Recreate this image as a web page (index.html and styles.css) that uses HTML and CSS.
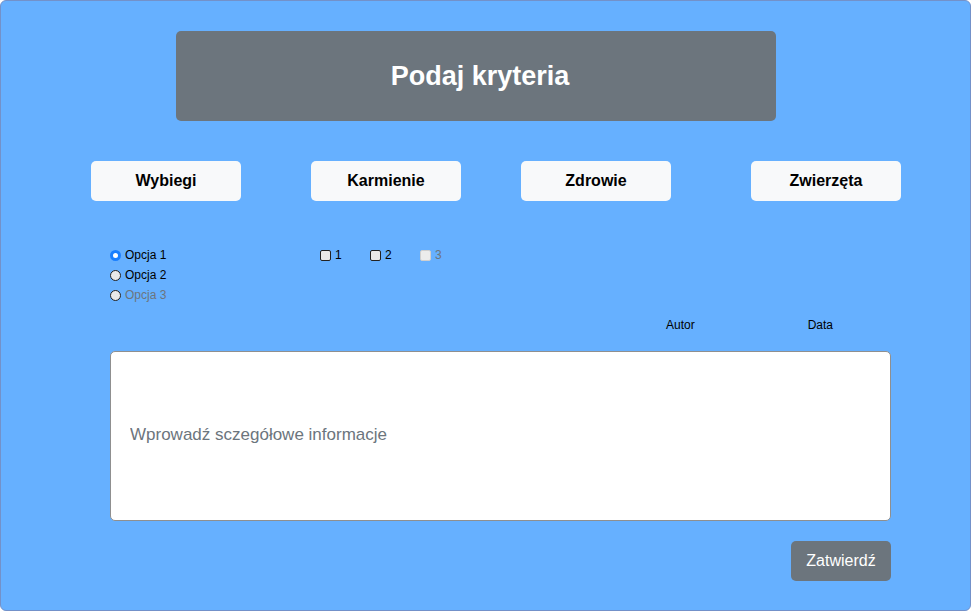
FILE: index.html
```html
<!DOCTYPE html>
<html lang="pl">
<head>
<meta charset="utf-8">
<title>Podaj kryteria</title>
<link rel="stylesheet" href="styles.css">
</head>
<body>
<div class="frame">
  <header class="header"><h1>Podaj kryteria</h1></header>
  <nav class="nav">
    <button class="nav-btn">Wybiegi</button>
    <button class="nav-btn">Karmienie</button>
    <button class="nav-btn">Zdrowie</button>
    <button class="nav-btn">Zwierzęta</button>
  </nav>
  <div class="options">
    <div class="radios">
      <label class="opt"><input class="radio" type="radio" name="o" checked><span>Opcja 1</span></label>
      <label class="opt"><input class="radio" type="radio" name="o"><span>Opcja 2</span></label>
      <label class="opt disabled"><input class="radio" type="radio" name="o" disabled><span>Opcja 3</span></label>
    </div>
    <div class="checks">
      <label class="opt"><input class="check" type="checkbox"><span>1</span></label>
      <label class="opt"><input class="check" type="checkbox"><span>2</span></label>
      <label class="opt disabled"><input class="check" type="checkbox" disabled><span>3</span></label>
    </div>
  </div>
  <div class="meta">
    <span class="autor">Autor</span>
    <span class="data">Data</span>
  </div>
  <input class="details" type="text" placeholder="Wprowadź sczegółowe informacje">
  <div class="actions">
    <button class="submit">Zatwierdź</button>
  </div>
</div>
</body>
</html>
```
FILE: styles.css
```css
* { box-sizing: border-box; }
html, body { margin: 0; padding: 0; }
body {
  font-family: "Liberation Sans", Arial, sans-serif;
  width: 971px;
  height: 611px;
}
.frame {
  width: 971px;
  height: 611px;
  border: 1px solid #7391c9;
  border-radius: 6px;
  background: #66b0ff;
  padding-top: 30px;
  display: flex;
  flex-direction: column;
}
.header {
  margin-left: 175px;
  width: 600px;
  height: 90px;
  background: #6c757d;
  border-radius: 5px;
  display: flex;
  align-items: center;
  justify-content: center;
  padding-left: 8px;
}
.header h1 {
  margin: 0;
  color: #fff;
  font-size: 27px;
  font-weight: bold;
}
.nav {
  margin-top: 40px;
  padding-left: 90px;
  display: grid;
  grid-template-columns: 220px 210px 230px 150px;
}
.nav-btn {
  width: 150px;
  height: 40px;
  border: none;
  border-radius: 5px;
  background: #f8f9fa;
  color: #000;
  font-family: "Liberation Sans", Arial, sans-serif;
  font-size: 16px;
  font-weight: bold;
  padding: 0;
}
.options {
  margin-top: 44px;
  padding-left: 109px;
  display: flex;
  font-size: 12px;
}
.radios {
  width: 210px;
  display: flex;
  flex-direction: column;
}
.checks {
  display: flex;
}
.opt {
  height: 20px;
  display: flex;
  align-items: center;
  color: #000;
}
.checks .opt { width: 50px; }
.opt input {
  -webkit-appearance: none;
  appearance: none;
  margin: 0 4px 0 0;
  width: 11px;
  height: 11px;
  background: #e9e9e9;
  border: 1px solid #222;
}
.radio { border-radius: 50%; }
.radio:checked {
  background: #fff;
  border: 3px solid #1a7fff;
}
.check { border-radius: 2px; }
.check:disabled {
  border-color: #cfcfcf;
  background: #ececec;
}
.opt.disabled { color: #6c757d; }
.meta {
  margin-top: 10px;
  height: 20px;
  display: flex;
  align-items: center;
  font-size: 12px;
  color: #000;
  padding-left: 665px;
}
.data { margin-left: 113px; }
.details {
  margin-top: 16px;
  margin-left: 109px;
  width: 781px;
  height: 170px;
  border: 1px solid #8f8f8f;
  border-radius: 5px;
  background: #fff;
  padding: 0 19px 2px;
  font-family: "Liberation Sans", Arial, sans-serif;
  font-size: 17px;
  outline: none;
}
.details::placeholder { color: #6c757d; }
.actions {
  margin-top: 20px;
  width: 890px;
  display: flex;
  justify-content: flex-end;
}
.submit {
  width: 100px;
  height: 40px;
  border: none;
  border-radius: 5px;
  background: #6c757d;
  color: #fff;
  font-family: "Liberation Sans", Arial, sans-serif;
  font-size: 16px;
  padding: 0;
}
```
